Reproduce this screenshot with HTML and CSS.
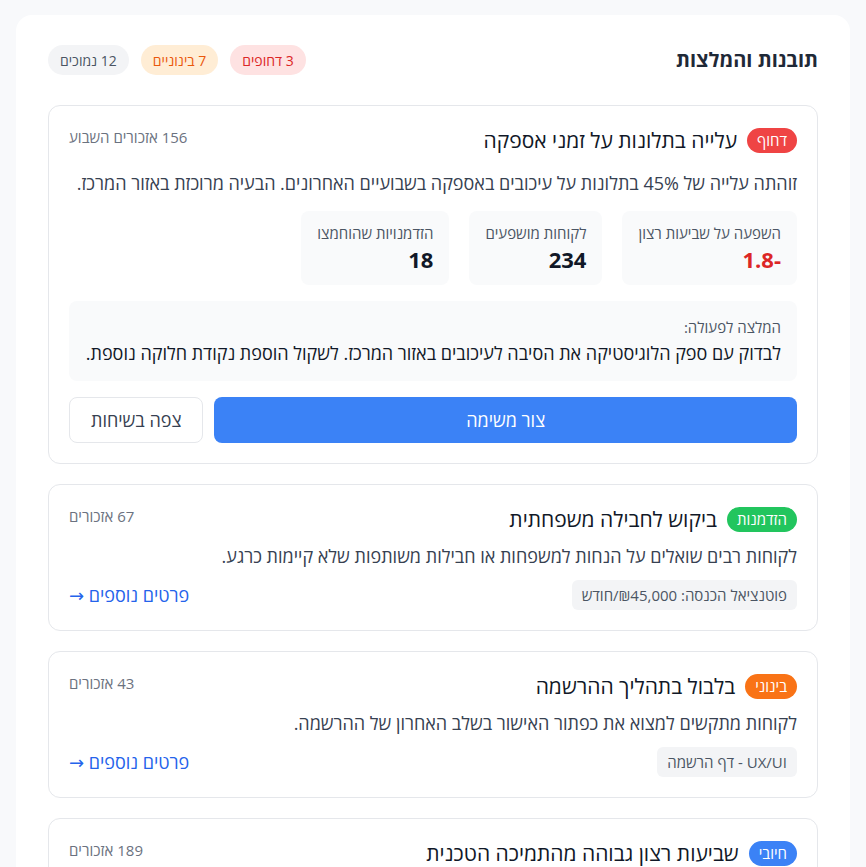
FILE: index.html
```html
<!DOCTYPE html>
<html lang="he" dir="rtl">
<head>
<meta charset="utf-8">
<title>תובנות והמלצות</title>
<link rel="stylesheet" href="styles.css">
</head>
<body>
<main class="panel">
  <header class="panel-head">
    <h2 class="panel-title">תובנות והמלצות</h2>
    <div class="counts">
      <span class="count count-red">3 דחופים</span>
      <span class="count count-orange">7 בינוניים</span>
      <span class="count count-gray">12 נמוכים</span>
    </div>
  </header>

  <section class="insight insight-open">
    <div class="insight-head">
      <div class="insight-title-wrap">
        <span class="badge badge-red">דחוף</span>
        <h3 class="insight-title">עלייה בתלונות על זמני אספקה</h3>
      </div>
      <span class="meta">156 אזכורים השבוע</span>
    </div>
    <p class="insight-desc">זוהתה עלייה של 45% בתלונות על עיכובים באספקה בשבועיים האחרונים. הבעיה מרוכזת באזור המרכז.</p>
    <div class="metrics">
      <div class="metric">
        <div class="metric-label">השפעה על שביעות רצון</div>
        <div class="metric-value metric-neg">-1.8</div>
      </div>
      <div class="metric">
        <div class="metric-label">לקוחות מושפעים</div>
        <div class="metric-value">234</div>
      </div>
      <div class="metric">
        <div class="metric-label">הזדמנויות שהוחמצו</div>
        <div class="metric-value">18</div>
      </div>
    </div>
    <div class="reco">
      <div class="reco-label">המלצה לפעולה:</div>
      <div class="reco-text">לבדוק עם ספק הלוגיסטיקה את הסיבה לעיכובים באזור המרכז. לשקול הוספת נקודת חלוקה נוספת.</div>
    </div>
    <div class="actions">
      <button class="btn btn-primary">צור משימה</button>
      <button class="btn btn-secondary">צפה בשיחות</button>
    </div>
  </section>

  <section class="insight">
    <div class="insight-head">
      <div class="insight-title-wrap">
        <span class="badge badge-green">הזדמנות</span>
        <h3 class="insight-title">ביקוש לחבילה משפחתית</h3>
      </div>
      <span class="meta">67 אזכורים</span>
    </div>
    <p class="insight-desc">לקוחות רבים שואלים על הנחות למשפחות או חבילות משותפות שלא קיימות כרגע.</p>
    <div class="insight-foot">
      <span class="tag">פוטנציאל הכנסה: ₪45,000/חודש</span>
      <a class="more" href="#">פרטים נוספים →</a>
    </div>
  </section>

  <section class="insight">
    <div class="insight-head">
      <div class="insight-title-wrap">
        <span class="badge badge-orange">בינוני</span>
        <h3 class="insight-title">בלבול בתהליך ההרשמה</h3>
      </div>
      <span class="meta">43 אזכורים</span>
    </div>
    <p class="insight-desc">לקוחות מתקשים למצוא את כפתור האישור בשלב האחרון של ההרשמה.</p>
    <div class="insight-foot">
      <span class="tag">UX/UI - דף הרשמה</span>
      <a class="more" href="#">פרטים נוספים →</a>
    </div>
  </section>

  <section class="insight">
    <div class="insight-head">
      <div class="insight-title-wrap">
        <span class="badge badge-blue">חיובי</span>
        <h3 class="insight-title">שביעות רצון גבוהה מהתמיכה הטכנית</h3>
      </div>
      <span class="meta">189 אזכורים</span>
    </div>
    <p class="insight-desc">לקוחות מציינים לטובה את המהירות והמקצועיות של צוות התמיכה הטכנית.</p>
    <div class="insight-foot">
      <span class="tag">ציון ממוצע: 4.8/5</span>
      <a class="more" href="#">פרטים נוספים →</a>
    </div>
  </section>
</main>
</body>
</html>
```
FILE: styles.css
```css
* { box-sizing: border-box; }

html, body {
  margin: 0;
  padding: 0;
}

body {
  background: #f8f9fb;
  font-family: "Open Sans", "Noto Sans", "DejaVu Sans", sans-serif;
  color: #111827;
  padding: 15px 16px 16px;
}

.panel {
  background: #ffffff;
  border-radius: 16px;
  padding: 30px 32px 32px;
}

.panel-head {
  display: flex;
  align-items: center;
  justify-content: space-between;
  margin-bottom: 30px;
}

.panel-title {
  margin: 0;
  font-size: 20px;
  font-weight: 700;
  color: #1f2937;
  line-height: 30px;
}

.counts {
  display: flex;
  gap: 12px;
}

.count {
  display: inline-flex;
  align-items: center;
  height: 30px;
  padding: 0 12px;
  border-radius: 999px;
  font-size: 14px;
}

.count-red { background: #fee2e2; color: #dc2626; }
.count-orange { background: #ffedd5; color: #ea580c; }
.count-gray { background: #f3f4f6; color: #4b5563; }

.insight {
  border: 1px solid #e5e7eb;
  border-radius: 12px;
  padding: 20px;
  margin-bottom: 20px;
}

.insight-head {
  display: flex;
  justify-content: space-between;
  align-items: flex-start;
  margin-bottom: 10px;
}

.insight-open .insight-head { margin-bottom: 16px; }

.insight-title-wrap {
  display: flex;
  align-items: center;
  gap: 10px;
}

.badge {
  display: inline-flex;
  align-items: center;
  height: 25px;
  padding: 0 10px;
  border-radius: 999px;
  font-size: 15px;
  color: #ffffff;
}

.badge-red { background: #ef4444; }
.badge-green { background: #22c55e; }
.badge-orange { background: #f97316; }
.badge-blue { background: #3b82f6; }

.insight-title {
  margin: 0;
  font-size: 21px;
  font-weight: 500;
  line-height: 28px;
  color: #111827;
}

.meta {
  font-size: 15px;
  color: #6b7280;
  line-height: 22px;
}

.insight-desc {
  margin: 0 0 11px;
  font-size: 18px;
  line-height: 26px;
  color: #374151;
}

.insight-open .insight-desc { margin-bottom: 15px; }

.metrics {
  display: flex;
  gap: 20px;
  margin-bottom: 16px;
}

.metric {
  background: #f9fafb;
  border-radius: 8px;
  padding: 12px 16px;
}

.metric-label {
  font-size: 15px;
  line-height: 20px;
  color: #4b5563;
}

.metric-value {
  margin-top: 2px;
  font-size: 22px;
  line-height: 28px;
  font-weight: 700;
  color: #111827;
}

.metric-neg { color: #dc2626; }

.reco {
  background: #f9fafb;
  border-radius: 8px;
  padding: 16px;
  margin-bottom: 16px;
}

.reco-label {
  font-size: 15px;
  line-height: 20px;
  color: #4b5563;
  margin-bottom: 4px;
}

.reco-text {
  font-size: 18px;
  line-height: 24px;
  color: #111827;
}

.actions {
  display: flex;
  gap: 11px;
}

.btn {
  font-family: inherit;
  font-size: 18px;
  height: 46px;
  border-radius: 8px;
  cursor: pointer;
}

.btn-primary {
  flex: 1;
  background: #3b82f6;
  color: #ffffff;
  border: none;
}

.btn-secondary {
  background: #ffffff;
  color: #374151;
  border: 1px solid #e5e7eb;
  padding: 0 21px;
}

.insight-foot {
  display: flex;
  justify-content: space-between;
  align-items: center;
}

.tag {
  display: inline-flex;
  align-items: center;
  height: 30px;
  padding: 0 10px;
  background: #f3f4f6;
  border-radius: 6px;
  font-size: 15px;
  color: #4b5563;
}

.more {
  font-size: 18px;
  color: #2563eb;
  text-decoration: none;
}
```
